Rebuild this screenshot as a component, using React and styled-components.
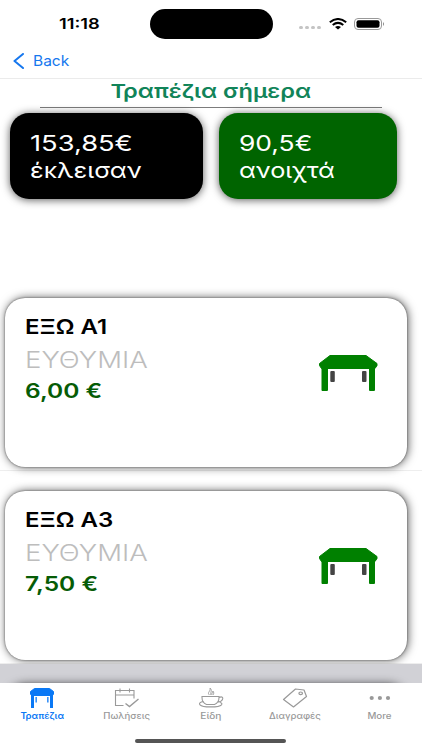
import React, { useState } from "react";
import styled, { createGlobalStyle } from "styled-components";

const GlobalStyle = createGlobalStyle`
  * {
    box-sizing: border-box;
  }

  body {
    margin: 0;
    background: #fff;
    font-family: Inter, "Noto Sans", sans-serif;
  }
`;

const Screen = styled.div`
  display: flex;
  flex-direction: column;
  width: 422px;
  height: 750px;
  overflow: hidden;
  background: #fff;
`;

// wide text: every label is stretched along x only
const Label = styled.span`
  display: block;
  width: max-content;
  white-space: nowrap;
  transform: scaleX(${({ $stretch }) => $stretch || 1.2});
  transform-origin: ${({ $origin }) => $origin || "left"} center;
`;

const StatusBar = styled.div`
  display: flex;
  flex: none;
  align-items: center;
  height: 48px;
  padding-left: 59px;
`;

const Time = styled.div`
  width: 91px;
  font-size: 15px;
  font-weight: 600;
  line-height: 20px;
`;

const Island = styled.div`
  width: 123px;
  height: 30px;
  border-radius: 15px;
  background: #000;
`;

const Signal = styled.div`
  display: flex;
  gap: 2px;
  margin: 7px 0 0 26px;

  i {
    width: 4px;
    height: 3px;
    border-radius: 2px;
    background: #c4c4c4;
  }
`;

const StatusIcon = styled.svg`
  display: block;
  margin-left: ${({ $gap }) => $gap}px;
`;

const NavBar = styled.div`
  display: flex;
  flex: none;
  align-items: center;
  gap: 9px;
  height: 31px;
  padding: 0 0 4px 13px;
  border-bottom: 1px solid #ebebeb;
  color: #1677ee;
  font-size: 14.5px;
  line-height: 20px;
`;

const Title = styled.h1`
  display: flex;
  flex: none;
  justify-content: center;
  margin: 0;
  padding-top: 1px;
  color: #118459;
  font-size: 19px;
  font-weight: 600;
  line-height: 24px;
`;

const Rule = styled.div`
  flex: none;
  height: 1px;
  margin: 3px 40px 0;
  background: #7c7c7c;
`;

const Summary = styled.div`
  display: flex;
  flex: none;
  gap: 16px;
  height: 170px;
  padding: 5px 0 0 10px;
`;

const Total = styled.div`
  width: ${({ $width }) => $width}px;
  height: 86px;
  padding: 17px 0 0 19.5px;
  border-radius: 19px;
  background: ${({ $color }) => $color};
  box-shadow: 0 1px 8px rgba(0, 0, 0, 0.65);
  color: #fff;
  font-size: 22px;
  line-height: 27px;
`;

const List = styled.div`
  flex: 1;
  min-height: 0;
  overflow: hidden;
`;

const Row = styled.div`
  height: 193px;
  padding: 20px 0 0 5px;
  border-bottom: 1px solid #eee;
  background: ${({ $selected }) => ($selected ? "#d1d1d6" : "transparent")};
`;

const Card = styled.div`
  display: flex;
  justify-content: space-between;
  width: 402px;
  height: 169px;
  padding: 14px 29px 0 20px;
  border-radius: 20px;
  background: #fff;
  box-shadow: 0 0 2px rgba(0, 0, 0, 0.55), 1px 0 10px rgba(0, 0, 0, 0.65);
`;

const TableName = styled.div`
  color: #000;
  font-size: 20px;
  font-weight: 600;
  line-height: 31px;
`;

const Waiter = styled.div`
  color: #bdbdbd;
  font-size: 22.5px;
  font-weight: 300;
  line-height: 33px;
`;

const Price = styled.div`
  color: #065c06;
  font-size: 20px;
  font-weight: 600;
  line-height: 31px;
`;

const CardIcon = styled.svg`
  display: block;
  margin-top: 42px;
`;

const TabBar = styled.nav`
  display: grid;
  flex: none;
  grid-template-columns: repeat(5, 1fr);
  height: 56px;
  padding-top: 4px;
  background: #fff;
`;

const Tab = styled.button`
  display: flex;
  flex-direction: column;
  align-items: center;
  gap: 1px;
  padding: 0;
  border: 0;
  background: none;
  color: ${({ $active }) => ($active ? "#0a78f5" : "#999")};
  font-family: inherit;
  font-size: 8.5px;
  font-weight: ${({ $active }) => ($active ? 600 : 500)};
  line-height: 12px;
`;

const HomeIndicator = styled.div`
  flex: none;
  width: 151px;
  height: 4px;
  margin: 0 0 7px 135px;
  border-radius: 2px;
  background: #555;
`;

const TableIcon = () => (
  <CardIcon width="60" height="38" viewBox="0 0 60 38">
    <path d="M12 1.500h36l11 8v2l-2 3H3.500l-2-3v-2z" fill="#008000" stroke="#008000" strokeLinejoin="round" />
    <path d="M3.500 14h6.500v22q0 1-1 1H4.500q-1 0-1-1zM51 14h6v22q0 1-1 1h-4q-1 0-1-1z" fill="#008000" />
    <rect x="12.300" y="17" width="4.500" height="11" rx="1" fill="#444" />
    <rect x="44" y="17" width="4.500" height="11" rx="1" fill="#444" />
  </CardIcon>
);

const tabIcons = {
  tables: (
    <svg width="26" height="22" viewBox="0 0 26 22">
      <path d="M5.500 1.500h15l4 3v2.500l-1 1.500h-21l-1-1.500V4.500z" fill="currentColor" stroke="currentColor" strokeLinejoin="round" />
      <path d="M2 8h3v13H2zM21 8h3v13h-3zM6.500 10h1.300v5.500H6.500zM18.200 10h1.300v5.500h-1.300z" fill="currentColor" />
    </svg>
  ),
  sales: (
    <svg width="26" height="22" viewBox="0 0 26 22" fill="none" stroke="currentColor" strokeWidth="1.100">
      <path d="M9.500 18.500h-8v-15h18.500v8M1.500 8h18.500M6 1.500v4M15.500 1.500v4" />
      <path d="M11.500 16.500l4 3 9-7.500" strokeWidth="1.400" />
    </svg>
  ),
  items: (
    <svg width="26" height="22" viewBox="0 0 26 22" fill="none" stroke="currentColor" strokeWidth="1.100">
      <path d="M4 9.500h17v1c0 3-2 6-4.500 7h-8C6 16.500 4 13.500 4 10.500zM21 10.500c3-1.500 4.500 0 3.500 2s-3 2.500-5 2.500" />
      <path d="M5.500 14.500C2 15 .7 16.500 2 17.800c2.500 2.800 19 2.800 21.500 0 .8-1 .3-2-1.500-2.300" />
      <path d="M11.500 8c-3-2.500 1.500-3.500.5-7 2.500 2 .5 4 .8 7M14 8c-1-2 1.500-2 .8-4 1.500 1.500 1 3 .2 4" strokeWidth=".9" />
    </svg>
  ),
  voids: (
    <svg width="26" height="22" viewBox="0 0 26 22" fill="none" stroke="currentColor" strokeWidth="1.200">
      <path d="M1.500 12.500L13.500 2l8.500 1 2.500 6.500L11.500 20z" strokeLinejoin="round" />
      <ellipse cx="18.700" cy="6.300" rx="1.800" ry="1.300" />
    </svg>
  ),
  more: (
    <svg width="26" height="22" viewBox="0 0 26 22" fill="currentColor">
      <ellipse cx="4.700" cy="11" rx="2.100" ry="1.900" />
      <ellipse cx="12.900" cy="11" rx="2.100" ry="1.900" />
      <ellipse cx="21" cy="11" rx="2.100" ry="1.900" />
    </svg>
  ),
};

const tabs = [
  { id: "tables", label: "Τραπέζια", stretch: 1.13 },
  { id: "sales", label: "Πωλήσεις", stretch: 1.13 },
  { id: "items", label: "Είδη", stretch: 1.2 },
  { id: "voids", label: "Διαγραφές", stretch: 1.13 },
  { id: "more", label: "More", stretch: 1.15 },
];

const orders = [
  { id: 1, name: "ΕΞΩ Α1", waiter: "ΕΥΘΥΜΙΑ", price: "6,00 €" },
  { id: 2, name: "ΕΞΩ Α3", waiter: "ΕΥΘΥΜΙΑ", price: "7,50 €" },
];

const App = () => {
  const [activeTab, setActiveTab] = useState("tables");

  return (
    <>
      <GlobalStyle />
      <Screen>
        <StatusBar>
          <Time>
            <Label $stretch={1.22}>11:18</Label>
          </Time>
          <Island />
          <Signal>
            <i />
            <i />
            <i />
            <i />
          </Signal>
          <StatusIcon $gap={8} width="18" height="12" viewBox="0 0 18 12">
            <g fill="none" stroke="#000" strokeWidth="2">
              <path d="M.8 4.200Q9-2.200 17.200 4.200" />
              <path d="M3.700 7Q9 2.800 14.300 7" />
            </g>
            <path d="M6 9q3-2 6 0l-3 2.500z" />
          </StatusIcon>
          <StatusIcon $gap={7} width="31" height="12" viewBox="0 0 31 12">
            <rect x=".5" y=".5" width="27" height="11" rx="3.500" fill="none" stroke="#999" />
            <rect x="2.500" y="2.200" width="23" height="7.600" rx="2" />
            <path d="M29 4q2 2 0 4z" fill="#888" />
          </StatusIcon>
        </StatusBar>
        <NavBar>
          <svg width="11" height="16" viewBox="0 0 11 16" fill="none" stroke="currentColor" strokeWidth="2">
            <path d="M10 1L1.500 8l8.500 7" strokeLinecap="round" strokeLinejoin="round" />
          </svg>
          <Label $stretch={1.07}>Back</Label>
        </NavBar>

        <Title>
          <Label $stretch={1.24} $origin="center">Τραπέζια σήμερα</Label>
        </Title>
        <Rule />
        <Summary>
          <Total $width={193} $color="#000">
            <Label $stretch={1.24}>153,85€</Label>
            <Label $stretch={1.16}>έκλεισαν</Label>
          </Total>
          <Total $width={178} $color="#006400">
            <Label $stretch={1.2}>90,5€</Label>
            <Label $stretch={1.15}>ανοιχτά</Label>
          </Total>
        </Summary>

        <List>
          {orders.map((order) => (
            <Row key={order.id}>
              <Card>
                <div>
                  <TableName>
                    <Label>{order.name}</Label>
                  </TableName>
                  <Waiter>
                    <Label $stretch={1.225}>{order.waiter}</Label>
                  </Waiter>
                  <Price>
                    <Label $stretch={1.225}>{order.price}</Label>
                  </Price>
                </div>
                <TableIcon />
              </Card>
            </Row>
          ))}
          <Row $selected>
            <Card />
          </Row>
        </List>

        <TabBar>
          {tabs.map((tab) => (
            <Tab
              key={tab.id}
              type="button"
              $active={tab.id === activeTab}
              onClick={() => setActiveTab(tab.id)}
            >
              {tabIcons[tab.id]}
              <Label $stretch={tab.stretch} $origin="center">{tab.label}</Label>
            </Tab>
          ))}
        </TabBar>
        <HomeIndicator />
      </Screen>
    </>
  );
};

export default App;
